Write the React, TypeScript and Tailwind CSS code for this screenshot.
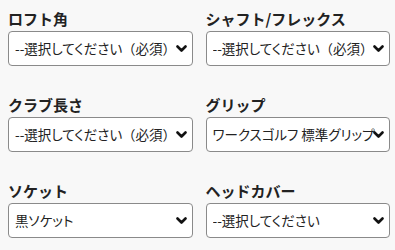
import React from 'react';

const FIELDS = [
  { label: 'ロフト角', value: '--選択してください（必須）' },
  { label: 'シャフト/フレックス', value: '--選択してください（必須）' },
  { label: 'クラブ長さ', value: '--選択してください（必須）' },
  { label: 'グリップ', value: 'ワークスゴルフ 標準グリップ' },
  { label: 'ソケット', value: '黒ソケット' },
  { label: 'ヘッドカバー', value: '--選択してください' },
];

function Chevron() {
  return (
    <svg width="11" height="8" viewBox="0 0 11 8" className="absolute right-[5px] top-1/2 -translate-y-1/2">
      <path d="M1.5 1.5 L5.5 5.5 L9.5 1.5" fill="none" stroke="#111" strokeWidth="2.6" strokeLinecap="round" strokeLinejoin="round" />
    </svg>
  );
}

// kana get proportional widths, full-width brackets keep their box
function SelectText({ value }: { value: string }) {
  const parts = value.split(/([（）])/).filter(Boolean);
  return (
    <span className="block overflow-hidden whitespace-nowrap text-[13.5px] text-[#222] [font-feature-settings:'palt']">
      {parts.map((p, i) =>
        p === '（' || p === '）' ? (
          <span key={i} className="[font-feature-settings:normal]">
            {p}
          </span>
        ) : (
          <React.Fragment key={i}>{p}</React.Fragment>
        ),
      )}
    </span>
  );
}

function SelectField({ label, value }: { label: string; value: string }) {
  return (
    <div className="flex flex-col">
      <label className="h-5 mb-[2px] text-[15px] leading-5 font-bold text-[#222]">{label}</label>
      <div className="relative flex items-center h-[35px] rounded-[4px] border border-[#8a8a8a] bg-white pl-[6px] pr-[3px]">
        <SelectText value={value} />
        <Chevron />
      </div>
    </div>
  );
}

export default function App() {
  return (
    <div
      className="w-[395px] h-[250px] bg-[#f8f8f8] pl-2 pr-[5px] pt-[9px]"
      style={{ fontFamily: '"Noto Sans CJK JP", "Noto Sans", sans-serif' }}
    >
      <div className="grid grid-cols-2 gap-x-[13px] gap-y-[29px]">
        {FIELDS.map((f) => (
          <SelectField key={f.label} label={f.label} value={f.value} />
        ))}
      </div>
    </div>
  );
}
